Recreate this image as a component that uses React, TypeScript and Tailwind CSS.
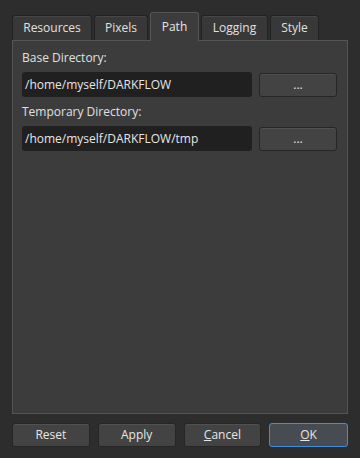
import React from 'react'

const font = { fontFamily: '"Open Sans", "Noto Sans", sans-serif' }

const tabs = [
  { name: 'Resources', w: 'w-[80px]' },
  { name: 'Pixels', w: 'w-[54px]' },
  { name: 'Path', w: 'w-[49px]', active: true },
  { name: 'Logging', w: 'w-[67px]' },
  { name: 'Style', w: 'w-[49px]' },
]

const Btn = ({ children, w, primary }: { children: React.ReactNode; w: string; primary?: boolean }) => (
  <button
    className={
      'h-[24px] rounded-[3px] text-[12px] text-[#e6e6e6] flex items-center justify-center ' +
      w +
      (primary
        ? ' border border-[#3b8fe0] bg-[#464c52]'
        : ' border border-[#262626] bg-[#434343] shadow-[inset_0_1px_0_#505050]')
    }
  >
    {children}
  </button>
)

const Row = ({ label, value }: { label: string; value: string }) => (
  <div className="flex flex-col">
    <div className="text-[12px] text-[#e0e0e0] leading-[18px] mb-[5px]">{label}</div>
    <div className="flex items-center gap-[7px]">
      <div className="w-[230px] h-[25px] rounded-[3px] bg-[#202020] flex items-center px-[3px] text-[12px] text-[#e6e6e6]">
        {value}
      </div>
      <Btn w="w-[78px]">...</Btn>
    </div>
  </div>
)

export default function App() {
  return (
    <div className="w-[360px] h-[458px] bg-[#2d2d2d] flex flex-col px-[12px]" style={font}>
      <div className="flex items-end h-[40px] pt-[12px] gap-[2px]">
        {tabs.map(t =>
          t.active ? (
            <div
              key={t.name}
              className={t.w + ' h-[29px] -mb-[1px] z-10 rounded-t-[3px] border border-b-0 border-[#555] bg-[#3c3c3c] flex items-center justify-center text-[12px] text-[#e6e6e6]'}
            >
              {t.name}
            </div>
          ) : (
            <div
              key={t.name}
              className={t.w + ' h-[25px] rounded-t-[3px] border border-b-0 border-[#222] bg-[#383838] shadow-[inset_0_1px_0_#474747] flex items-center justify-center text-[12px] text-[#e0e0e0]'}
            >
              {t.name}
            </div>
          )
        )}
      </div>
      <div className="h-[374px] border border-[#555] bg-[#3c3c3c] px-[9px] pt-[8px] flex flex-col gap-[6px]">
        <Row label="Base Directory:" value="/home/myself/DARKFLOW" />
        <Row label="Temporary Directory:" value="/home/myself/DARKFLOW/tmp" />
      </div>
      <div className="flex mt-[9px] gap-[8px]">
        <Btn w="w-[78px]">Reset</Btn>
        <Btn w="w-[78px]">Apply</Btn>
        <Btn w="w-[78px]"><span><span className="underline">C</span>ancel</span></Btn>
        <Btn w="w-[79px]" primary><span><span className="underline">O</span>K</span></Btn>
      </div>
    </div>
  )
}
